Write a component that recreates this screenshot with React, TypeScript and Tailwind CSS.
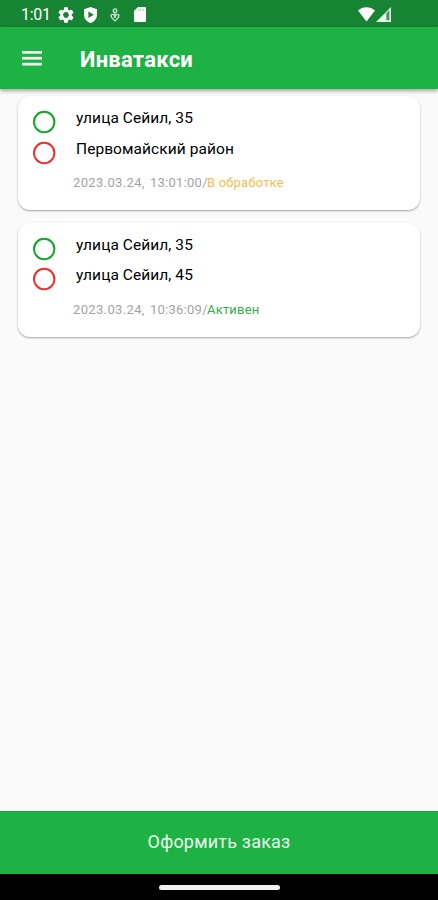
type Order = {
  from: string;
  to: string;
  date: string;
  time: string;
  status: string;
  statusClass: string;
};

const orders: Order[] = [
  {
    from: "улица Сейил, 35",
    to: "Первомайский район",
    date: "2023.03.24,",
    time: "13:01:00/",
    status: "В обработке",
    statusClass: "text-[#fbbc4b]",
  },
  {
    from: "улица Сейил, 35",
    to: "улица Сейил, 45",
    date: "2023.03.24,",
    time: "10:36:09/",
    status: "Активен",
    statusClass: "text-[#35ae4b]",
  },
];

export default function App() {
  return (
    <div className="flex h-[900px] w-full flex-col overflow-hidden bg-[#fafafa] font-['Roboto',sans-serif]">
      <StatusBar />
      <header className="z-10 flex h-[62px] shrink-0 items-center bg-[#1eb144] pl-[22px] shadow-[0_2px_4px_rgba(0,0,0,0.35)]">
        <button type="button" aria-label="Меню" className="text-[#effbf1]">
          <MenuIcon />
        </button>
        <h1 className="ml-[38px] mt-1 text-[22px] font-bold leading-7 tracking-[0.25px] text-white">
          Инватакси
        </h1>
      </header>

      <main className="flex flex-1 flex-col gap-[12.5px] px-[18px] pt-[7px]">
        {orders.map((order) => (
          <OrderCard key={order.time} order={order} />
        ))}
      </main>

      <button
        type="button"
        className="h-[63px] shrink-0 border-t border-[#18a337] bg-[#1eb144] pb-[3px] text-[18px] tracking-[0.2px] text-[#ecfbef]"
      >
        Оформить заказ
      </button>
      <div className="flex h-[26px] shrink-0 items-center justify-center bg-black">
        <div className="h-[5px] w-[121px] rounded-full bg-[#f3eff3]" />
      </div>
    </div>
  );
}

function StatusBar() {
  return (
    <div className="flex h-[27px] shrink-0 items-center bg-[#178434] pl-[21px] pt-[2px] pr-[47px] text-white">
      <span className="w-[30px] text-[16px] leading-none tracking-[-0.3px]">1:01</span>
      <div className="ml-[7px] flex items-center">
        <GearIcon />
        <ShieldIcon />
        <DebugIcon />
        <SdCardIcon />
      </div>
      <div className="ml-auto flex items-center gap-px">
        <WifiIcon />
        <SignalIcon />
      </div>
    </div>
  );
}

function OrderCard({ order }: { order: Order }) {
  return (
    <article className="h-[114px] rounded-[12px] bg-white pl-[15px] pt-[11px] shadow-[0_1px_2px_rgba(0,0,0,0.35)]">
      <Stop label={order.from} ringClass="text-[#12a62a]" />
      <Stop label={order.to} ringClass="text-[#ea322e]" />
      <p className="ml-10 mt-[7px] flex text-[13px] leading-4 text-[#a3a3a3]">
        <span className="w-[77px] tracking-[0.35px]">{order.date}</span>
        <span className="w-[57px] tracking-[0.25px]">{order.time}</span>
        <span className={`tracking-[0.2px] ${order.statusClass}`}>{order.status}</span>
      </p>
    </article>
  );
}

function Stop({ label, ringClass }: { label: string; ringClass: string }) {
  return (
    <div className="flex h-[30.5px] items-start">
      <svg
        className={`mt-[3px] ${ringClass}`}
        width="23"
        height="24"
        viewBox="0 0 23 24"
        fill="none"
        aria-hidden="true"
      >
        <circle cx="11.2" cy="12" r="10.2" stroke="currentColor" strokeWidth="2" />
      </svg>
      <span className="ml-5 text-[15.5px] leading-[22px] tracking-[0.07px] text-black">
        {label}
      </span>
    </div>
  );
}

function MenuIcon() {
  return (
    <svg width="20" height="15" viewBox="0 0 20 15" fill="currentColor" aria-hidden="true">
      <rect width="20" height="2.7" />
      <rect y="5.9" width="20" height="2.7" />
      <rect y="11.8" width="20" height="2.7" />
    </svg>
  );
}

function GearIcon() {
  return (
    <svg width="16" height="16" viewBox="2 2 20 20" fill="currentColor" aria-hidden="true">
      <path d="M19.14 12.94c.04-.3.06-.61.06-.94 0-.32-.02-.64-.07-.94l2.03-1.58c.18-.14.23-.41.12-.61l-1.92-3.32c-.12-.22-.37-.29-.59-.22l-2.39.96c-.5-.38-1.03-.7-1.62-.94l-.36-2.54c-.04-.24-.24-.41-.48-.41h-3.84c-.24 0-.43.17-.47.41l-.36 2.54c-.59.24-1.13.57-1.62.94l-2.39-.96c-.22-.08-.47 0-.59.22L2.74 8.87c-.12.21-.08.47.12.61l2.03 1.58c-.05.3-.09.63-.09.94s.02.64.07.94l-2.03 1.58c-.18.14-.23.41-.12.61l1.92 3.32c.12.22.37.29.59.22l2.39-.96c.5.38 1.03.7 1.62.94l.36 2.54c.05.24.24.41.48.41h3.84c.24 0 .44-.17.47-.41l.36-2.54c.59-.24 1.13-.56 1.62-.94l2.39.96c.22.08.47 0 .59-.22l1.92-3.32c.12-.22.07-.47-.12-.61l-2.01-1.58zM12 15.6c-1.98 0-3.6-1.62-3.6-3.6s1.62-3.6 3.6-3.6 3.6 1.62 3.6 3.6-1.62 3.6-3.6 3.6z" />
    </svg>
  );
}

function ShieldIcon() {
  return (
    <svg className="ml-[9px]" width="15" height="16" viewBox="0 0 15 16" aria-hidden="true">
      <path d="M7.5 0 14 2.3V7.5C14 11.6 11.4 14.8 7.5 16 3.6 14.8 1 11.6 1 7.5V2.3Z" fill="white" />
      <path d="M5.4 4.4 10.8 7.7 5.4 11Z" fill="#178434" />
    </svg>
  );
}

function DebugIcon() {
  return (
    <svg
      className="ml-[12px]"
      width="10"
      height="14"
      viewBox="0 0 10 14"
      fill="none"
      stroke="#c9edcf"
      strokeWidth="1.3"
      aria-hidden="true"
    >
      <circle cx="5" cy="2.7" r="1.8" />
      <path d="M5 8.4C4 5.9 1 5.9 1 7.8 1 9.8 3.4 11.2 5 12.8 6.6 11.2 9 9.8 9 7.8 9 5.9 6 5.9 5 8.4Z" />
      <path d="M5 4.5V10" />
    </svg>
  );
}

function SdCardIcon() {
  return (
    <svg className="ml-[14px]" width="12" height="15" viewBox="0 0 12 15" aria-hidden="true">
      <path d="M4 0H11Q12 0 12 1V14Q12 15 11 15H1Q0 15 0 14V4Z" fill="white" />
      <path d="M4.4 2.2V3.7M6.8 2.2V3.7M9.2 2.2V3.7" stroke="#8fc09b" strokeWidth="1.1" />
    </svg>
  );
}

function WifiIcon() {
  return (
    <svg width="17" height="15" viewBox="0 0 17 15" fill="white" aria-hidden="true">
      <path d="M0 3.6C4.6-.9 12.4-.9 17 3.6L8.5 14.5Z" />
    </svg>
  );
}

function SignalIcon() {
  return (
    <svg width="15" height="15" viewBox="0 0 15 15" aria-hidden="true">
      <path d="M0 15 15 0V15Z" fill="#e6f4e8" />
      <path d="M10.3 6.2 13.4 3V13.2H10.3Z" fill="#4e9460" />
    </svg>
  );
}
